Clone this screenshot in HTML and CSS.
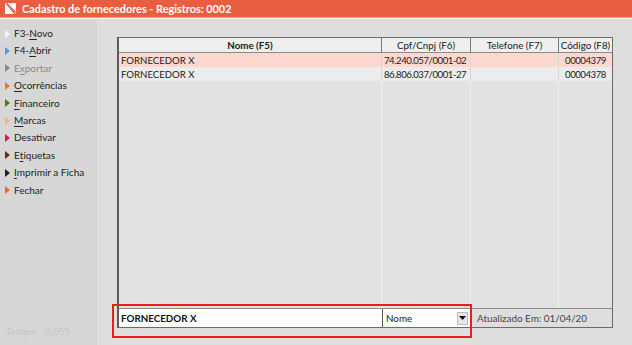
FILE: index.html
```html
<!DOCTYPE html>
<html lang="pt">
<head>
<meta charset="utf-8">
<link rel="stylesheet" href="styles.css">
</head>
<body>
<div class="titlebar">
  <svg class="logo" width="11" height="11" viewBox="0 0 11 11"><path d="M0 0H11V11Z" fill="#fff"/><path d="M0 0L0 11L9 11Z" fill="#fff"/><path d="M1.5 0.5L10.5 9.5" stroke="#e95d41" stroke-width="1.6"/></svg>
  <span class="title">Cadastro de fornecedores - Registros: 0002</span>
</div>
<div class="app">
  <aside class="sidebar">
    <ul class="menu">
      <li><span class="tri c-novo"></span>F3-<u>N</u>ovo</li>
      <li><span class="tri c-abrir"></span>F4-<u>A</u>brir</li>
      <li class="disabled"><span class="tri c-exp"></span>E<u>x</u>portar</li>
      <li><span class="tri c-oco"></span><u>O</u>corrências</li>
      <li><span class="tri c-fin"></span><u>F</u>inanceiro</li>
      <li><span class="tri c-mar"></span><u>M</u>arcas</li>
      <li><span class="tri c-des"></span>Desativar</li>
      <li><span class="tri c-eti"></span>E<u>t</u>iquetas</li>
      <li><span class="tri c-imp"></span><u>I</u>mprimir a Ficha</li>
      <li><span class="tri c-fec"></span>Fechar</li>
    </ul>
    <div class="tempo">Tempo:&nbsp;&nbsp; 0,055</div>
  </aside>
  <main class="main">
    <div class="grid">
      <div class="thead cols">
        <div class="th">Nome (F5)</div>
        <div class="th">Cpf/Cnpj (F6)</div>
        <div class="th">Telefone (F7)</div>
        <div class="th">Código (F8)</div>
      </div>
      <div class="tr cols sel">
        <div class="td">FORNECEDOR X</div>
        <div class="td num">74.240.057/0001-02</div>
        <div class="td"></div>
        <div class="td num center">00004379</div>
      </div>
      <div class="tr cols alt">
        <div class="td">FORNECEDOR X</div>
        <div class="td num">86.806.037/0001-27</div>
        <div class="td"></div>
        <div class="td num center">00004378</div>
      </div>
      <div class="filler cols">
        <div class="fc"></div><div class="fc"></div><div class="fc"></div><div class="fc"></div>
      </div>
      <div class="footer">
        <div class="search">FORNECEDOR X</div>
        <div class="select"><span>Nome</span><span class="drop"><svg width="7" height="4" viewBox="0 0 7 4"><path d="M0 0H7L3.5 4Z" fill="#111"/></svg></span></div>
        <div class="updated">Atualizado Em: 01/04/20</div>
      </div>
    </div>
    <div class="highlight"></div>
  </main>
</div>
</body>
</html>
```
FILE: styles.css
```css
* { box-sizing: border-box; }
html, body { margin: 0; padding: 0; }
body {
  width: 632px;
  height: 345px;
  overflow: hidden;
  background: #dedede;
  font-family: Lato, "Open Sans", sans-serif;
  color: #222;
  display: flex;
  flex-direction: column;
}
.titlebar {
  height: 19px;
  background: #e95d41;
  border-bottom: 1px solid #f2f2f2;
  box-shadow: inset 0 -1px 0 #f39a86;
  display: flex;
  align-items: center;
  padding: 0 0 2px 5px;
  gap: 6px;
}
.logo { display: block; }
.title {
  color: #fff;
  font-weight: bold;
  font-size: 10.9px;
  line-height: 15px;
}
.app {
  flex: 1;
  display: flex;
}
.sidebar {
  width: 97px;
  background: #d7d7d7;
  display: flex;
  flex-direction: column;
  justify-content: space-between;
  padding: 6px 0 8px 5px;
}
.menu {
  list-style: none;
  margin: 0;
  padding: 0;
}
.menu li {
  height: 17.4px;
  line-height: 17.4px;
  font-size: 10px;
  display: flex;
  align-items: center;
  color: #222;
}
.menu li.disabled { color: #8a8a8a; }
.menu u { text-decoration-thickness: 1px; text-underline-offset: 2px; }
.tri {
  width: 0;
  height: 0;
  border-top: 4.5px solid transparent;
  border-bottom: 4.5px solid transparent;
  border-left: 5px solid #fff;
  margin-right: 4px;
}
.c-novo { border-left-color: #f4f4f4; }
.c-abrir { border-left-color: #3da8dc; }
.c-exp { border-left-color: #8a8a8a; }
.c-oco { border-left-color: #ea7a30; }
.c-fin { border-left-color: #4b7d1e; }
.c-mar { border-left-color: #f5b383; }
.c-des { border-left-color: #d8194a; }
.c-eti { border-left-color: #7e1f1c; }
.c-imp { border-left-color: #222; }
.c-fec { border-left-color: #f26a2e; }
.tempo {
  font-size: 9.8px;
  color: #c3c3c3;
  padding-left: 1px;
}
.main {
  flex: 1;
  position: relative;
  padding: 18px 19px 17px 20px;
  display: flex;
}
.grid {
  flex: 1;
  display: flex;
  flex-direction: column;
  border: 1px solid #6b6b6b;
  border-left: 2px solid #5a5a5a;
  background: #e2e2e2;
}
.cols {
  display: grid;
  grid-template-columns: 263px 89px 88px 1fr;
}
.thead {
  height: 15px;
  background: #efefef;
  border-bottom: 1px solid #8a8a8a;
}
.th {
  font-size: 9.8px;
  font-weight: bold;
  text-align: center;
  line-height: 14px;
  border-right: 1px solid #7a7a7a;
  white-space: nowrap;
  overflow: hidden;
  color: #1a1a1a;
}
.th:last-child { border-right: 0; font-weight: normal; }
.th:nth-child(2), .th:nth-child(3) { font-weight: normal; }
.tr { height: 14px; }
.tr.sel { background: #fcd8cf; }
.tr.alt { background: #ececec; }
.td {
  font-size: 9.6px;
  line-height: 15px;
  padding-left: 2px;
  border-right: 1px solid #d6d6d6;
  white-space: nowrap;
  overflow: hidden;
  color: #1a1a1a;
}
.td.num { letter-spacing: -0.45px; }
.td:last-child { border-right: 0; }
.td.center { text-align: center; padding-left: 0; }
.filler { flex: 1; }
.fc { border-right: 1px solid #f0f0f0; }
.fc:last-child { border-right: 0; }
.footer {
  height: 19px;
  display: flex;
  border-top: 1px solid #8c8c8c;
  background: #dedede;
}
.search {
  width: 263px;
  background: #fff;
  font-size: 9.8px;
  font-weight: bold;
  line-height: 18px;
  padding-left: 2px;
  color: #111;
}
.select {
  width: 89px;
  background: #fff;
  border-left: 1px solid #555;
  display: flex;
  align-items: center;
  justify-content: space-between;
  font-size: 9.8px;
  padding: 0 3px 0 3px;
  color: #222;
}
.drop {
  width: 11px;
  height: 13px;
  background: #e6e6e6;
  border: 1px solid #bcbcbc;
  display: flex;
  align-items: center;
  justify-content: center;
}
.updated {
  flex: 1;
  font-size: 9.9px;
  line-height: 18px;
  padding-left: 5px;
  color: #444;
  border-left: 1px solid #9a9a9a;
}
.highlight {
  position: absolute;
  left: 15px;
  top: 285px;
  width: 360px;
  height: 34px;
  border: 2px solid #e81e1e;
  pointer-events: none;
}
```
